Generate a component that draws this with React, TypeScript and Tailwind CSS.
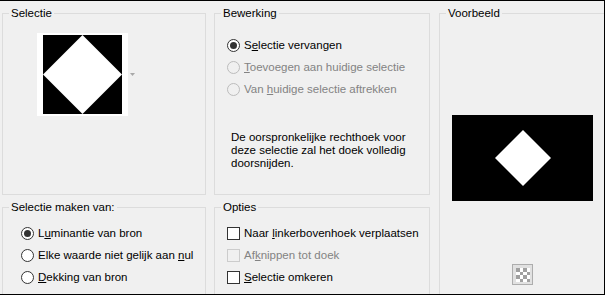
import type { ReactNode } from "react";

function Group({ title, className, children }: { title: string; className?: string; children?: ReactNode }) {
  return (
    <fieldset className={`shrink-0 min-w-0 border border-[#dcdcdc] ${className ?? ""}`}>
      <legend className="ml-[6px] px-[2px] leading-[15px] text-black">{title}</legend>
      {children}
    </fieldset>
  );
}

function Radio({ checked, disabled, children }: { checked?: boolean; disabled?: boolean; children: ReactNode }) {
  return (
    <div className="flex items-center h-[22px] gap-[4px]">
      <span
        className={`w-[13px] h-[13px] shrink-0 rounded-full border flex items-center justify-center ${
          disabled ? "border-[#bcbcbc] bg-[#f0f0f0]" : "border-[#333333] bg-white"
        }`}
      >
        {checked && <span className="w-[7px] h-[7px] rounded-full bg-[#333333]" />}
      </span>
      <span className={disabled ? "text-[#838383]" : "text-black"}>{children}</span>
    </div>
  );
}

function Check({ disabled, children }: { disabled?: boolean; children: ReactNode }) {
  return (
    <div className="flex items-center h-[22px] gap-[4px]">
      <span
        className={`w-[13px] h-[13px] shrink-0 border ${
          disabled ? "border-[#cccccc] bg-[#f0f0f0]" : "border-[#333333] bg-white"
        }`}
      />
      <span className={disabled ? "text-[#838383]" : "text-black"}>{children}</span>
    </div>
  );
}

const U = ({ children }: { children: ReactNode }) => <span className="underline underline-offset-[1px]">{children}</span>;

export default function App() {
  return (
    <div className="w-[605px] h-[295px] bg-[#f0f0f0] border-t border-r border-b border-black overflow-hidden flex pl-[2px] pt-[5px] font-['Liberation_Sans',Arial,sans-serif] text-[11.5px] leading-[15px]">
      {/* left column */}
      <div className="flex flex-col gap-[5px] w-[204px] shrink-0">
        <Group title="Selectie" className="h-[189px]">
          <div className="mt-[12px] ml-[34px] flex items-center gap-[2px]">
            <div className="w-[91px] h-[83px] bg-white flex items-center justify-center">
              <svg width="79" height="79" viewBox="0 0 79 79">
                <rect width="79" height="79" fill="#000" />
                <polygon points="39.5,0 79,39.5 39.5,79 0,39.5" fill="#fff" />
              </svg>
            </div>
            <svg width="5" height="3" viewBox="0 0 5 3">
              <polygon points="0,0 5,0 2.5,3" fill="#a8a8a8" />
            </svg>
          </div>
        </Group>
        <Group title="Selectie maken van:" className="h-[100px]">
          <div className="pt-[7px] pl-[18px]">
            <Radio checked>
              L<U>u</U>minantie van bron
            </Radio>
            <Radio>
              Elke waarde niet gelijk aan <U>n</U>ul
            </Radio>
            <Radio>
              <U>D</U>ekking van bron
            </Radio>
          </div>
        </Group>
      </div>

      {/* middle column */}
      <div className="flex flex-col gap-[5px] w-[216px] shrink-0 ml-[8px]">
        <Group title="Bewerking" className="h-[189px]">
          <div className="pt-[13px] pl-[12px]">
            <Radio checked>
              S<U>e</U>lectie vervangen
            </Radio>
            <Radio disabled>
              <U>T</U>oevoegen aan huidige selectie
            </Radio>
            <Radio disabled>
              Van <U>h</U>uidige selectie aftrekken
            </Radio>
          </div>
          <p className="mt-[31px] pl-[16px] leading-[13px] text-black">
            De oorspronkelijke rechthoek voor
            <br />
            deze selectie zal het doek volledig
            <br />
            doorsnijden.
          </p>
        </Group>
        <Group title="Opties" className="h-[100px]">
          <div className="pt-[7px] pl-[12px]">
            <Check>
              Naar <U>l</U>inkerbovenhoek verplaatsen
            </Check>
            <Check disabled>
              Af<U>k</U>nippen tot doek
            </Check>
            <Check>
              <U>S</U>electie omkeren
            </Check>
          </div>
        </Group>
      </div>

      {/* right column */}
      <Group title="Voorbeeld" className="w-[175px] h-[300px] ml-[9px]">
        <div className="mt-[94px] ml-[12px] w-[141px] h-[86px] bg-black flex items-center justify-center">
          <svg width="56" height="56" viewBox="0 0 56 56">
            <polygon points="28,0 56,28 28,56 0,28" fill="#fff" />
          </svg>
        </div>
        <div className="mt-[63px] ml-[72px] w-[21px] h-[21px] border border-[#adadad] bg-[#e1e1e1] flex items-center justify-center">
          <svg width="14" height="14" viewBox="0 0 4 4" shapeRendering="crispEdges">
            <rect width="4" height="4" fill="#fff" />
            <rect x="0" y="0" width="1" height="1" fill="#a0a0a0" />
            <rect x="2" y="0" width="1" height="1" fill="#a0a0a0" />
            <rect x="1" y="1" width="1" height="1" fill="#a0a0a0" />
            <rect x="3" y="1" width="1" height="1" fill="#a0a0a0" />
            <rect x="0" y="2" width="1" height="1" fill="#a0a0a0" />
            <rect x="2" y="2" width="1" height="1" fill="#a0a0a0" />
            <rect x="1" y="3" width="1" height="1" fill="#a0a0a0" />
            <rect x="3" y="3" width="1" height="1" fill="#a0a0a0" />
          </svg>
        </div>
      </Group>
    </div>
  );
}
